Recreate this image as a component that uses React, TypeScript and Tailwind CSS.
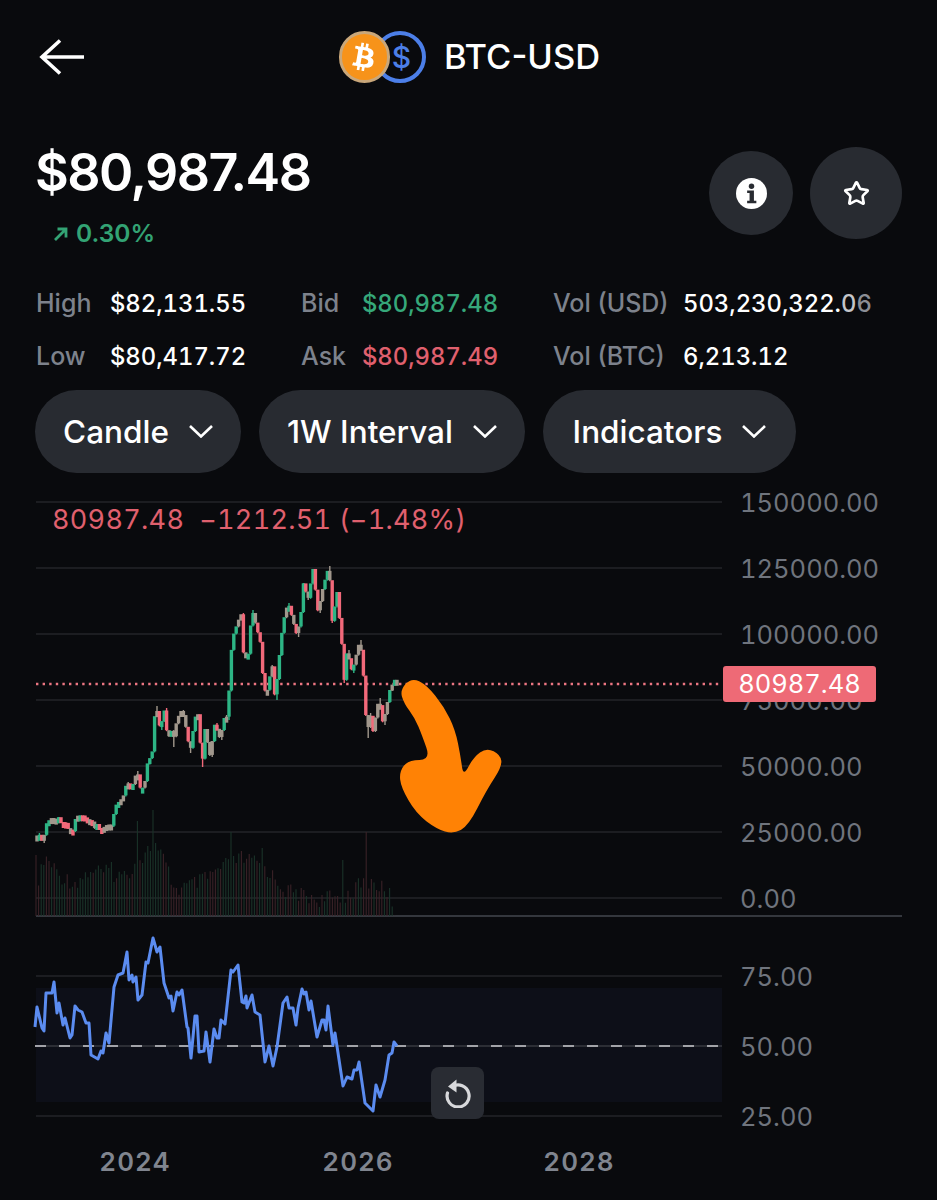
import { Star } from "lucide-react";
import { FaBtc } from "react-icons/fa";

const FONT = "font-['Inter','Liberation_Sans',sans-serif]";

type Pt = [number, number];

// traced from the weekly chart, page pixels
const PRICE: Pt[] = [
  [36, 840], [38, 833], [43, 843], [46, 825], [50, 820], [53, 818], [56, 824], [58, 817], [62, 825], [65, 822], [68, 829], [73, 832], [76, 817], [82, 816],
  [87, 820], [92, 822], [95, 830], [97, 825], [100, 830], [104, 828], [108, 825], [112, 827], [115, 807], [123, 798], [127, 782], [130, 788], [133, 785], [137, 771],
  [141, 793], [145, 782], [148, 760], [152, 758], [153, 730], [156, 706], [160, 730], [165, 708], [167, 737], [173, 730],
  [172, 747], [177, 720], [182, 710], [185, 723], [190, 753], [195, 718], [198, 715], [202, 767], [205, 730], [210, 757],
  [215, 723], [220, 740], [225, 715], [228, 720], [230, 663], [233, 637], [238, 622], [242, 613], [243, 653], [248, 657],
  [252, 610], [257, 630], [262, 650], [263, 690], [267, 693], [272, 665], [275, 700], [280, 650], [283, 623], [288, 603],
  [297, 637], [302, 607], [303, 583], [308, 600], [313, 570], [318, 613], [323, 588], [329, 566], [332, 623], [337, 593],
  [342, 647], [344, 683], [347, 650], [352, 673], [360, 640], [364, 683], [367, 738], [370, 713], [373, 732], [379, 698],
  [383, 725], [390, 690], [395, 680], [397, 685],
];

const RSI: Pt[] = [
  [35, 1027], [37, 1007], [42, 1028], [44, 1031], [46, 993], [52, 993], [54, 982], [57, 1013], [59, 1003], [63, 1025],
  [65, 1018], [70, 1038], [72, 1035], [75, 1006], [78, 1010], [82, 1012], [86, 1023], [89, 1023], [91, 1055], [98, 1059],
  [101, 1051], [103, 1053], [106, 1033], [109, 1043], [114, 987], [118, 975], [123, 973], [127, 952], [129, 980],
  [132, 975], [133, 982], [136, 977], [138, 1000], [142, 995], [146, 962], [148, 963], [153, 938], [157, 952], [160, 947],
  [164, 983], [169, 998], [171, 996], [173, 1011], [177, 992], [179, 995], [182, 990], [187, 1027], [188, 1028],
  [191, 1058], [195, 1016], [197, 1016], [199, 1052], [204, 1051], [206, 1032], [210, 1062], [214, 1029], [217, 1038],
  [219, 1038], [221, 1020], [225, 1024], [231, 970], [233, 972], [238, 965], [242, 1002], [244, 1003], [246, 996],
  [247, 1008], [252, 995], [255, 1012], [260, 1015], [265, 1062], [269, 1046], [273, 1066], [277, 1047], [283, 1003],
  [287, 997], [289, 1008], [293, 1008], [296, 1025], [298, 1008], [302, 989], [304, 994], [306, 992], [309, 1010],
  [311, 1001], [317, 1037], [322, 1020], [324, 1020], [326, 1030], [328, 1006], [333, 1045], [335, 1033], [343, 1086],
  [347, 1077], [352, 1079], [354, 1070], [357, 1070], [359, 1062], [365, 1103], [373, 1111], [376, 1085], [380, 1097],
  [385, 1080], [389, 1055], [392, 1053], [394, 1042], [397, 1046],
];

// top of the volume bars
const VOLUME: Pt[] = [
  [36, 878], [46, 850], [60, 868], [75, 875], [92, 862], [112, 866], [125, 868], [135, 856], [154, 836], [158, 842],
  [165, 855], [175, 882], [200, 874], [225, 858], [240, 850], [262, 856], [285, 882], [320, 892], [350, 886], [365, 872],
  [375, 876], [390, 886], [397, 910],
];

const SPIKES: Record<number, number> = { 36: 855, 137: 821, 111: 862, 154: 810, 231: 832, 262: 848, 367: 832, 343: 860 };

const ARROW: Pt[] = [
  [540, 420], [575, 383], [620, 405], [672, 470], [706, 540], [722, 620], [730, 680], [760, 622], [800, 593], [842, 615],
  [846, 650], [800, 720], [745, 828], [700, 852], [650, 837], [588, 790], [543, 712], [538, 665], [565, 630], [632, 630],
  [606, 555], [585, 505], [552, 460],
];

const GRID_Y = [502, 568, 634, 700, 766, 832, 898];
const PRICE_LABELS: [string, number][] = [
  ["150000.00", 502], ["125000.00", 568], ["100000.00", 634], ["75000.00", 700], ["50000.00", 766], ["25000.00", 832], ["0.00", 898],
];
const RSI_LABELS: [string, number][] = [["75.00", 976], ["50.00", 1046], ["25.00", 1116]];
const YEARS: [string, number][] = [["2024", 135], ["2026", 358], ["2028", 579]];

const noise = (i: number) => {
  const v = Math.sin(i * 12.9898) * 43758.5453;
  return v - Math.floor(v);
};

const yAt = (pts: Pt[], x: number) => {
  for (let i = 1; i < pts.length; i++) {
    if (x <= pts[i][0] && pts[i][0] !== pts[i - 1][0]) {
      const t = (x - pts[i - 1][0]) / (pts[i][0] - pts[i - 1][0]);
      if (t >= 0) return pts[i - 1][1] + t * (pts[i][1] - pts[i - 1][1]);
    }
  }
  return pts[pts.length - 1][1];
};

const buildCandles = () => {
  const step = 2.4;
  const out: { x: number; top: number; h: number; hi: number; lo: number; color: string }[] = [];
  let open = PRICE[0][1];
  for (let x = 37; x <= 398; x += step) {
    const close = yAt(PRICE, x);
    const near = PRICE.filter((p) => p[0] >= x - step && p[0] <= x).map((p) => p[1]);
    const hi = Math.min(open, close, ...near);
    const lo = Math.max(open, close, ...near);
    const body = Math.abs(open - close);
    const color = body < (x > 150 ? 14 : 9) && noise(x) > 0.45 ? "#a1978c" : close <= open ? "#2db585" : "#f2697a";
    out.push({ x, top: Math.min(open, close) - 1, h: Math.max(body, 6), hi, lo, color });
    open = close;
  }
  return out;
};

const buildVolume = () => {
  const out: { x: number; top: number; color: string }[] = [];
  for (let x = 36, i = 0; x <= 397; x += 2.6, i++) {
    const spike = Object.keys(SPIKES).find((k) => Math.abs(Number(k) - x) < 1.3);
    const top = spike ? SPIKES[Number(spike)] : yAt(VOLUME, x) + noise(i) * 16;
    out.push({ x, top, color: noise(i + 40) > 0.5 ? "#3a2227" : "#1a3329" });
  }
  return out;
};

const smoothClosed = (pts: Pt[]) => {
  const mid = (a: Pt, b: Pt): Pt => [(a[0] + b[0]) / 2, (a[1] + b[1]) / 2];
  const start = mid(pts[pts.length - 1], pts[0]);
  let d = `M${start[0]} ${start[1]}`;
  pts.forEach((p, i) => {
    const m = mid(p, pts[(i + 1) % pts.length]);
    d += ` Q${p[0]} ${p[1]} ${m[0]} ${m[1]}`;
  });
  return d + "Z";
};

const toLine = (pts: Pt[]) => pts.map((p) => p.join(",")).join(" ");

function CoinPair() {
  return (
    <div className="relative w-[87px] h-[52px]">
      <div className="absolute right-0 top-0 flex items-center justify-center w-[52px] h-[52px] rounded-full border-4 border-[#4c7fe8] text-[#4c7fe8]">
        <span className="text-[30px] leading-none font-medium pl-[3px]">$</span>
      </div>
      <div className="absolute left-0 top-0 flex items-center justify-center w-[51px] h-[52px] rounded-full border-[3px] border-[#c9a77a] bg-[#f7931a] text-white">
        <FaBtc className="w-[24px] h-[28px] rotate-[10deg]" />
      </div>
    </div>
  );
}

function Stat({ label, labelWidth, children }: { label: string; labelWidth: string; children: React.ReactNode }) {
  return (
    <div className="flex items-center h-[53px]">
      <span className={`${labelWidth} text-[#7d828c] text-[25px]`}>{label}</span>
      <span className="tabular-nums text-[23.800px]">{children}</span>
    </div>
  );
}

function Pill({ label, className }: { label: string; className: string }) {
  return (
    <button className={`${className} flex items-center justify-center gap-[20px] h-[83px] rounded-full bg-[#282b31] text-white text-[31.500px] font-medium`}>
      {label}
      <svg className="w-[24px] h-[13px]" viewBox="0 0 24 13" fill="none" stroke="currentColor" strokeWidth="2.6">
        <path d="M1 1l11 10.500L23 1" />
      </svg>
    </button>
  );
}

function Chart() {
  const candles = buildCandles();
  const volume = buildVolume();
  return (
    <div className="relative flex-1 text-[#6f747d] text-[25.500px] tabular-nums">
      <svg className="absolute inset-0 w-[937px] h-[710px]" viewBox="0 490 937 710">
        {GRID_Y.map((y) => (
          <line key={y} x1={36} x2={722} y1={y} y2={y} stroke="#1c1d21" strokeWidth={2} />
        ))}
        <line x1={36} x2={902} y1={916} y2={916} stroke="#34373d" strokeWidth={2} />

        {volume.map((b) => (
          <line key={b.x} x1={b.x} x2={b.x} y1={b.top} y2={916} stroke={b.color} strokeWidth={1.1} />
        ))}

        <line x1={36} x2={722} y1={684} y2={684} stroke="#ec7682" strokeWidth={2.4} strokeDasharray="2.4 4.2" />

        {candles.map((c) => (
          <g key={c.x}>
            <line x1={c.x} x2={c.x} y1={c.hi} y2={c.lo} stroke={c.color} strokeWidth={1.4} />
            <rect x={c.x - 1.7} y={c.top} width={3.4} height={c.h} fill={c.color} />
          </g>
        ))}

        <rect x={36} y={988} width={686} height={114} fill="#0d0f18" />
        <line x1={36} x2={722} y1={976} y2={976} stroke="#1c1d21" strokeWidth={2} />
        <line x1={36} x2={722} y1={1116} y2={1116} stroke="#1c1d21" strokeWidth={2} />
        <line x1={36} x2={722} y1={1046} y2={1046} stroke="#2c2e35" strokeWidth={2} />
        <line x1={35} x2={722} y1={1046} y2={1046} stroke="#a2a3a8" strokeWidth={2} strokeDasharray="11 13" />
        <polyline points={toLine(RSI)} fill="none" stroke="#5b8cf0" strokeWidth={3} strokeLinejoin="round" />

        {/* hand drawn arrow on top of the screenshot */}
        <path transform="translate(220 550) scale(0.3333)" d={smoothClosed(ARROW)} fill="#ff8205" />
      </svg>

      <div className="absolute left-[52px] top-[14px] flex gap-[15px] text-[#e0606e] text-[27px] leading-8 tracking-[0.3px]">
        <span>80987.48</span>
        <span>−1212.51 (−1.48%)</span>
      </div>

      {[...PRICE_LABELS, ...RSI_LABELS].map(([text, y]) => (
        <span key={text} className="absolute left-[740px] leading-8" style={{ top: y - 490 - 15 }}>
          {text}
        </span>
      ))}

      <div className="absolute left-[723px] top-[176px] flex items-center justify-center w-[153px] h-[36px] rounded-[3px] bg-[#ee6a76] text-white text-[25.500px]">
        80987.48
      </div>

      <button className="absolute left-[431px] top-[577px] flex items-center justify-center w-[53px] h-[52px] rounded-lg bg-[#292c33] text-[#d8d9dc]">
        <svg className="w-[30px] h-[30px]" viewBox="0 0 30 30" fill="none">
          <path d="M9.5 8.5A11 11 0 1 1 4.5 15" stroke="currentColor" strokeWidth="3.2" strokeLinecap="round" />
          <path d="M13.5 1.5v13L5 8.5z" fill="currentColor" />
        </svg>
      </button>

      {YEARS.map(([text, x]) => (
        <span
          key={text}
          className="absolute -translate-x-1/2 top-[656px] text-[#80858f] text-[26px] leading-8 font-semibold tracking-[1px]"
          style={{ left: x }}
        >
          {text}
        </span>
      ))}
    </div>
  );
}

export default function App() {
  return (
    <div className={`${FONT} flex flex-col w-[937px] h-[1200px] overflow-hidden bg-[#090a0d] text-white`}>
      {/* top bar */}
      <div className="relative flex items-center justify-center h-[52px] mt-[31px]">
        <svg className="absolute left-[39px] top-[8px] w-[46px] h-[36px]" viewBox="0 0 46 36" fill="none" stroke="white" strokeWidth="3.6">
          <path d="M45 18H3M21 1.5 3 18l18 16.5" />
        </svg>
        <div className="flex items-center gap-[18px] ml-[2px]">
          <CoinPair />
          <span className="text-[34.500px] font-medium">BTC-USD</span>
        </div>
      </div>

      {/* price + actions */}
      <div className="flex justify-between pl-[35px] pr-[35px] mt-[46px] h-[118px]">
        <div>
          <div className="text-[52px] leading-[87px] font-semibold tracking-[-1.500px]">$80,987.48</div>
          <div className="flex items-center gap-[7px] ml-[18px] mt-[2px] text-[#33a374] text-[24.500px] leading-[31px] font-semibold">
            <svg className="w-[16px] h-[16px]" viewBox="0 0 16 16" fill="none" stroke="currentColor" strokeWidth="2.8">
              <path d="M2 14 13 3M4.5 3H13v8.5" />
            </svg>
            0.30%
          </div>
        </div>
        <div className="flex items-start gap-[17px] pt-[18px]">
          <button className="flex items-center justify-center w-[84px] h-[84px] mt-[4px] rounded-full bg-[#282b31]">
            <svg className="w-[31px] h-[31px]" viewBox="0 0 32 32">
              <circle cx="16" cy="16" r="16" fill="white" />
              <circle cx="16" cy="8.5" r="2.8" fill="#282b31" />
              <path d="M11.5 13h7v10.5h2.5V26H11.5v-2.5H14V15.500h-2.500z" fill="#282b31" />
            </svg>
          </button>
          <button className="flex items-center justify-center w-[92px] h-[92px] rounded-full bg-[#282b31]">
            <Star className="w-[27px] h-[27px]" strokeWidth={2.4} />
          </button>
        </div>
      </div>

      {/* stats */}
      <div className="flex pl-[36px] mt-[30px] font-medium">
        <div className="w-[265px]">
          <Stat label="High" labelWidth="w-[74px]">$82,131.55</Stat>
          <Stat label="Low" labelWidth="w-[74px]">$80,417.72</Stat>
        </div>
        <div className="w-[252px]">
          <Stat label="Bid" labelWidth="w-[61px]"><span className="text-[#36a87a]">$80,987.48</span></Stat>
          <Stat label="Ask" labelWidth="w-[61px]"><span className="text-[#e0606e]">$80,987.49</span></Stat>
        </div>
        <div>
          <Stat label="Vol (USD)" labelWidth="w-[130px]">
            503,230,322.<span className="text-[#c4c5c9]">0</span><span className="text-[#8b8e95]">6</span>
          </Stat>
          <Stat label="Vol (BTC)" labelWidth="w-[130px]">6,213.12</Stat>
        </div>
      </div>

      {/* chart controls */}
      <div className="flex gap-[18px] pl-[35px] mt-[7px]">
        <Pill label="Candle" className="w-[206px]" />
        <Pill label="1W Interval" className="w-[266px]" />
        <Pill label="Indicators" className="w-[253px]" />
      </div>

      <div className="h-[17px]" />
      <Chart />
    </div>
  );
}
